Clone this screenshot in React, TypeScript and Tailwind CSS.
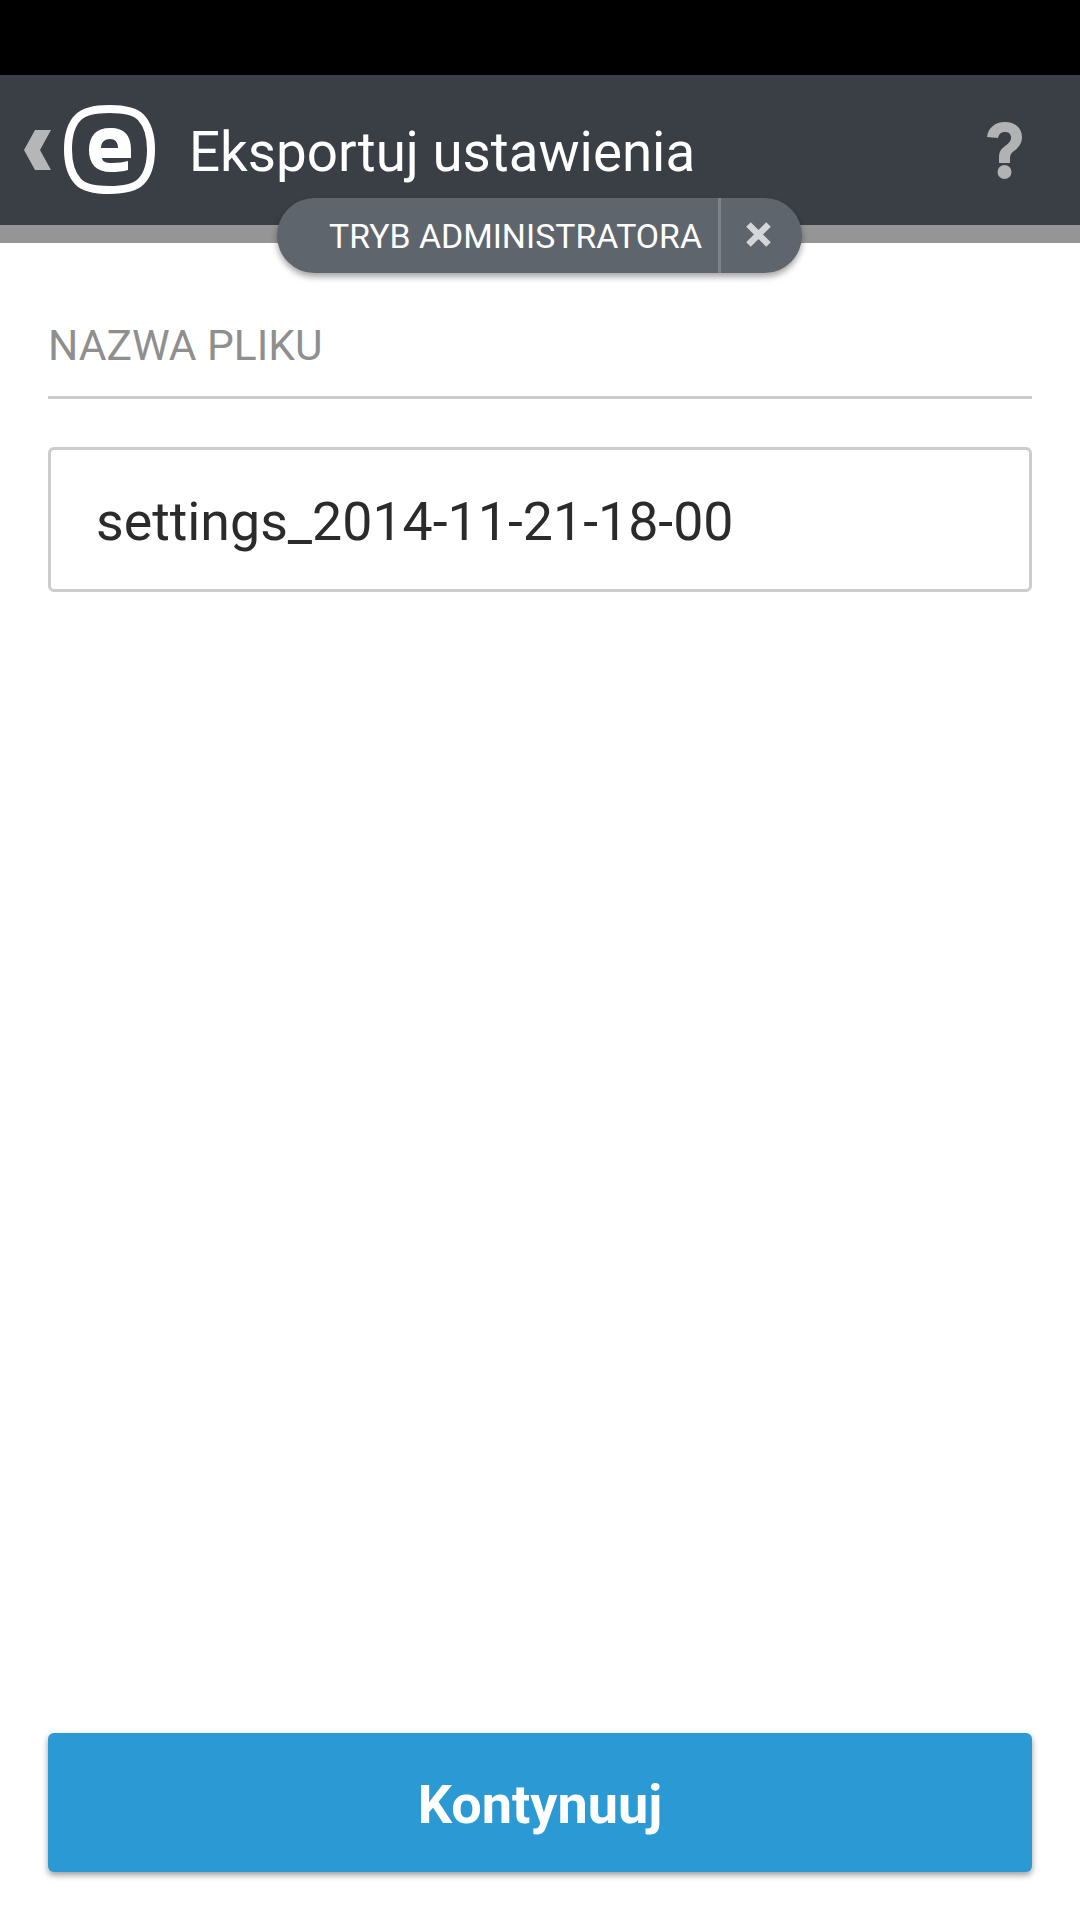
export default function App() {
  return (
    <div className="relative flex h-[1920px] w-[1080px] flex-col bg-white font-['Roboto',sans-serif]">
      <div className="h-[75px] bg-black" />
      <header className="flex h-[150px] items-center bg-[#3a3e45] pl-[24px] pr-[58px]">
        <svg width="27" height="40" viewBox="0 0 27 40">
          <path d="M27 0H11L0 20l11 20h16L16 20z" fill="#b4b6b8" />
        </svg>
        <svg width="92" height="92" viewBox="0 0 92 92" className="ml-[13px]">
          <path d="M45.5 5C60 5 71 7 77 13.500S87 30 87 45.500 83.500 71 77 77.500 60 86 45.500 86 20 84 14 77.500 4 61 4 45.500 7.500 20 14 13.500 31 5 45.500 5z" fill="none" stroke="#fff" strokeWidth="8" />
          <path fillRule="evenodd" fill="#fff" d="M46 24C61 24 67 32 67 46V54H38C38.500 58 42 59 48 59C54 59 60 58 64 57V66C59 67.500 53 68 47 68C32 68 25 60 25 46C25 32 32 24 46 24ZM37 44H54C54 38 51 35 46 35C41 35 37 38 37 44Z" />
        </svg>
        <h1 className="mt-[5px] ml-[33px] flex-1 text-[54.7px] leading-none font-normal text-white">Eksportuj ustawienia</h1>
        <svg width="35" height="57" viewBox="0 0 35 57">
          <path fill="#b0b2b4" d="M0 15C1 6 8 0 18 0C28 0 35 6 35 15C35 22 31 26 27 29C24 31 23 33 23 36V41H12V35C12 30 14 27 18 24C22 21 24 19 24 16C24 12 22 10 18 10C14 10 12 12 11 16Z" />
          <circle cx="17.500" cy="50" r="7" fill="#b0b2b4" />
        </svg>
      </header>
      <div className="h-[18px] bg-[#959595]" />

      <div className="absolute top-[198px] left-[277px] flex h-[75px] w-[525px] items-center rounded-full bg-[#5f656d] shadow-[0_4px_6px_rgba(0,0,0,0.35)]">
        <span className="mt-[2px] ml-[52px] w-[389px] text-[33.8px] leading-none whitespace-nowrap text-white">TRYB ADMINISTRATORA</span>
        <div className="h-full w-[3px] bg-[#7d8289]" />
        <svg width="25" height="25" viewBox="0 0 25 25" className="mt-[-3px] ml-[25px]">
          <path d="M2.500 2.500l20 20M22.500 2.500l-20 20" stroke="#d5d6d8" strokeWidth="6.500" />
        </svg>
      </div>

      <main className="flex flex-1 flex-col px-[48px]">
        <div className="mt-[80px] text-[42.5px] leading-[46px] text-[#8f8f8f]">NAZWA PLIKU</div>
        <div className="mt-[27px] h-[3px] bg-[#cccccc]" />
        <div className="mt-[48px] flex h-[145px] items-center rounded-[6px] border-[3px] border-[#cccccc] pt-[6px] pl-[45px] text-[53.7px] text-[#2b2b2b]">
          settings_2014-11-21-18-00
        </div>
        <button className="mt-auto mb-[48px] flex h-[139px] items-center justify-center rounded-[6px] bg-[#2b9ad4] pt-[3px] text-[54px] font-bold text-white shadow-[0_3px_6px_rgba(0,0,0,0.4)]">
          Kontynuuj
        </button>
      </main>
    </div>
  );
}
